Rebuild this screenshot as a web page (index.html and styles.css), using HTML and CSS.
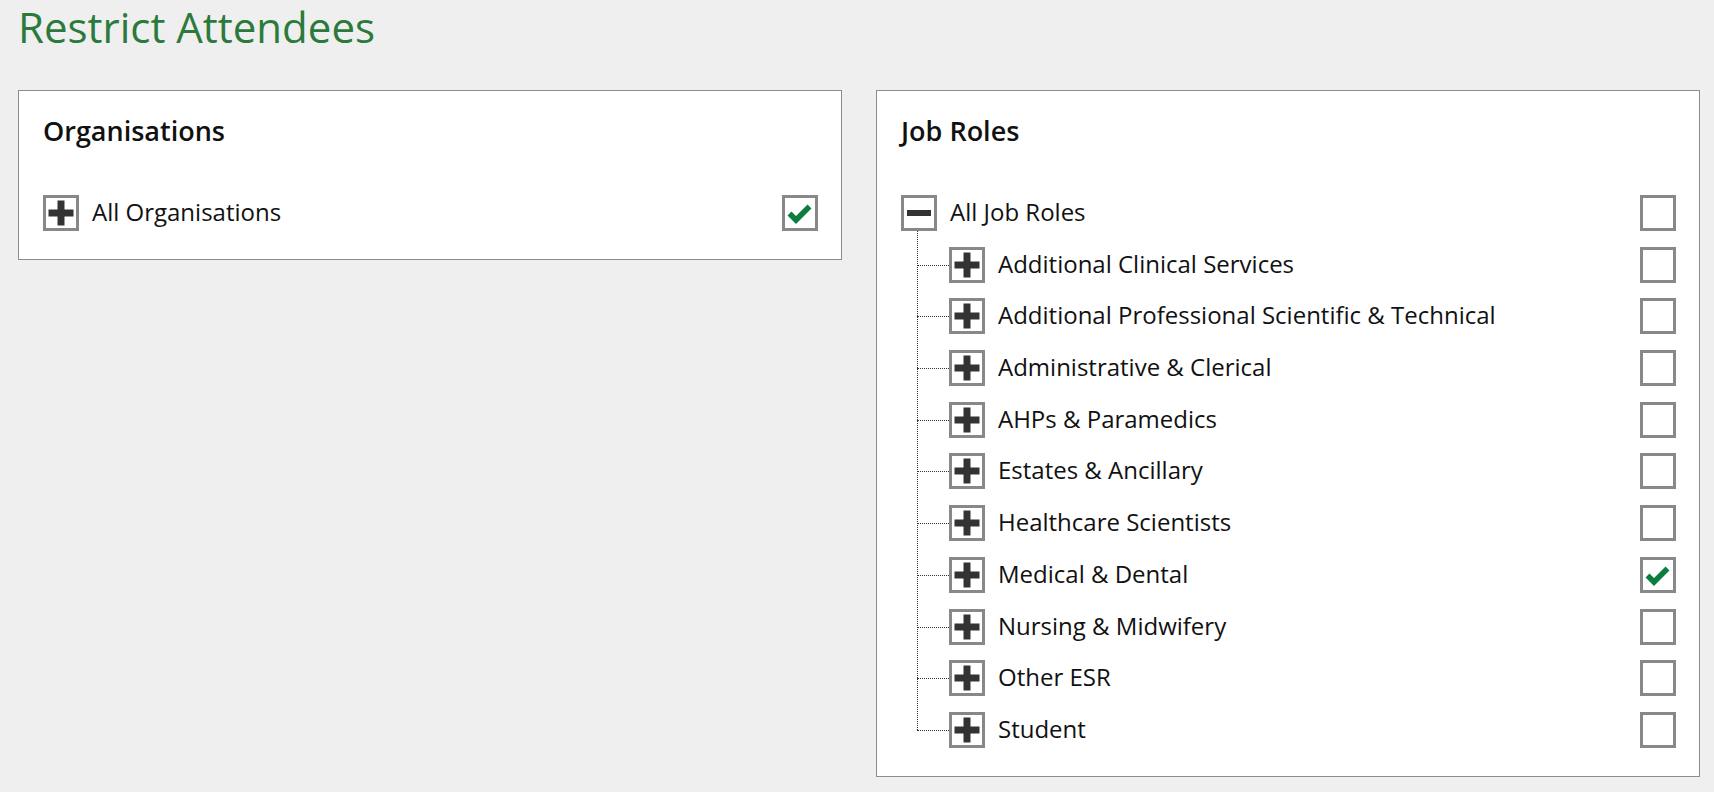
FILE: index.html
```html
<!DOCTYPE html>
<html lang="en">
<head>
    <meta charset="UTF-8">
    <meta name="viewport" content="width=device-width, initial-scale=1.0">
    <title>Restrict Attendees</title>
    <link rel="stylesheet" href="styles.css">
</head>
<body>
    <div class="page">
        <h1 class="title">Restrict Attendees</h1>

        <div class="panels">
            <section class="panel">
                <h2 class="panel-title">Organisations</h2>
                <ul class="tree">
                    <li>
                        <div class="row">
                            <span class="toggle"><svg viewBox="0 0 30 30"><rect x="2.5" y="11.5" width="25" height="7"/><rect x="11.5" y="2.5" width="7" height="25"/></svg></span>
                            <span class="label">All Organisations</span>
                            <span class="check"><svg viewBox="0 0 30 30"><polyline points="4.5,15.5 11,22 24.5,8.5"/></svg></span>
                        </div>
                    </li>
                </ul>
            </section>

            <section class="panel">
                <h2 class="panel-title">Job Roles</h2>
                <ul class="tree">
                    <li>
                        <div class="row">
                            <span class="toggle"><svg viewBox="0 0 30 30"><rect x="3" y="12" width="24" height="6"/></svg></span>
                            <span class="label">All Job Roles</span>
                            <span class="check"></span>
                        </div>
                        <ul class="children">
                            <li>
                                <div class="row">
                                    <span class="toggle"><svg viewBox="0 0 30 30"><rect x="2.5" y="11.5" width="25" height="7"/><rect x="11.5" y="2.5" width="7" height="25"/></svg></span>
                                    <span class="label">Additional Clinical Services</span>
                                    <span class="check"></span>
                                </div>
                            </li>
                            <li>
                                <div class="row">
                                    <span class="toggle"><svg viewBox="0 0 30 30"><rect x="2.5" y="11.5" width="25" height="7"/><rect x="11.5" y="2.5" width="7" height="25"/></svg></span>
                                    <span class="label">Additional Professional Scientific &amp; Technical</span>
                                    <span class="check"></span>
                                </div>
                            </li>
                            <li>
                                <div class="row">
                                    <span class="toggle"><svg viewBox="0 0 30 30"><rect x="2.5" y="11.5" width="25" height="7"/><rect x="11.5" y="2.5" width="7" height="25"/></svg></span>
                                    <span class="label">Administrative &amp; Clerical</span>
                                    <span class="check"></span>
                                </div>
                            </li>
                            <li>
                                <div class="row">
                                    <span class="toggle"><svg viewBox="0 0 30 30"><rect x="2.5" y="11.5" width="25" height="7"/><rect x="11.5" y="2.5" width="7" height="25"/></svg></span>
                                    <span class="label">AHPs &amp; Paramedics</span>
                                    <span class="check"></span>
                                </div>
                            </li>
                            <li>
                                <div class="row">
                                    <span class="toggle"><svg viewBox="0 0 30 30"><rect x="2.5" y="11.5" width="25" height="7"/><rect x="11.5" y="2.5" width="7" height="25"/></svg></span>
                                    <span class="label">Estates &amp; Ancillary</span>
                                    <span class="check"></span>
                                </div>
                            </li>
                            <li>
                                <div class="row">
                                    <span class="toggle"><svg viewBox="0 0 30 30"><rect x="2.5" y="11.5" width="25" height="7"/><rect x="11.5" y="2.5" width="7" height="25"/></svg></span>
                                    <span class="label">Healthcare Scientists</span>
                                    <span class="check"></span>
                                </div>
                            </li>
                            <li>
                                <div class="row">
                                    <span class="toggle"><svg viewBox="0 0 30 30"><rect x="2.5" y="11.5" width="25" height="7"/><rect x="11.5" y="2.5" width="7" height="25"/></svg></span>
                                    <span class="label">Medical &amp; Dental</span>
                                    <span class="check"><svg viewBox="0 0 30 30"><polyline points="4.5,15.5 11,22 24.5,8.5"/></svg></span>
                                </div>
                            </li>
                            <li>
                                <div class="row">
                                    <span class="toggle"><svg viewBox="0 0 30 30"><rect x="2.5" y="11.5" width="25" height="7"/><rect x="11.5" y="2.5" width="7" height="25"/></svg></span>
                                    <span class="label">Nursing &amp; Midwifery</span>
                                    <span class="check"></span>
                                </div>
                            </li>
                            <li>
                                <div class="row">
                                    <span class="toggle"><svg viewBox="0 0 30 30"><rect x="2.5" y="11.5" width="25" height="7"/><rect x="11.5" y="2.5" width="7" height="25"/></svg></span>
                                    <span class="label">Other ESR</span>
                                    <span class="check"></span>
                                </div>
                            </li>
                            <li>
                                <div class="row">
                                    <span class="toggle"><svg viewBox="0 0 30 30"><rect x="2.5" y="11.5" width="25" height="7"/><rect x="11.5" y="2.5" width="7" height="25"/></svg></span>
                                    <span class="label">Student</span>
                                    <span class="check"></span>
                                </div>
                            </li>
                        </ul>
                    </li>
                </ul>
            </section>
        </div>
    </div>
</body>
</html>
```

FILE: styles.css
```css
body {
    margin: 0;
    background-color: #efefef; /* light grey page */
    color: #111;
    font-family: "Open Sans", "Liberation Sans", sans-serif;
}

.page {
    padding: 0 14px 0 18px;
}

.title {
    margin: 0 0 36px;
    font-size: 42px;
    font-weight: 400;
    line-height: 54px;
    color: #2b7a3c;
}

.panels {
    display: flex;
    align-items: flex-start;
    gap: 34px;
}

.panel {
    flex: 1 1 0;
    min-width: 0;
    background-color: #fff;
    border: 1px solid #8c8c8c;
    padding: 22px 23px 28px 24px;
}

.panel-title {
    margin: 0 0 46px;
    font-size: 27px;
    font-weight: 600;
    line-height: 36px;
}

.tree,
.children {
    list-style: none;
    margin: 0;
    padding: 0;
}

.children {
    position: relative;
    padding: 15.7px 0 0 48px;
}

/* vertical dotted connector */
.children::before {
    content: "";
    position: absolute;
    left: 16px;
    top: 0;
    bottom: 18px;
    border-left: 1px dotted #333;
}

.children li {
    position: relative;
}

.children li + li {
    margin-top: 15.7px;
}

/* horizontal dotted connector */
.children li::before {
    content: "";
    position: absolute;
    left: -32px;
    top: 18px;
    width: 32px;
    border-top: 1px dotted #333;
}

.row {
    display: flex;
    align-items: center;
    height: 36px;
}

.toggle,
.check {
    flex: none;
    width: 36px;
    height: 36px;
    box-sizing: border-box;
    border: 3px solid #888;
    background-color: #fff;
}

.toggle svg,
.check svg {
    display: block;
    width: 30px;
    height: 30px;
}

.toggle svg {
    fill: #333;
}

.check {
    margin-left: auto;
}

.check polyline {
    fill: none;
    stroke: #0b7d3e;
    stroke-width: 5.5;
}

.label {
    margin-left: 13px;
    padding-bottom: 3px;
    font-size: 24px;
    line-height: 33px;
    white-space: nowrap;
}
```
